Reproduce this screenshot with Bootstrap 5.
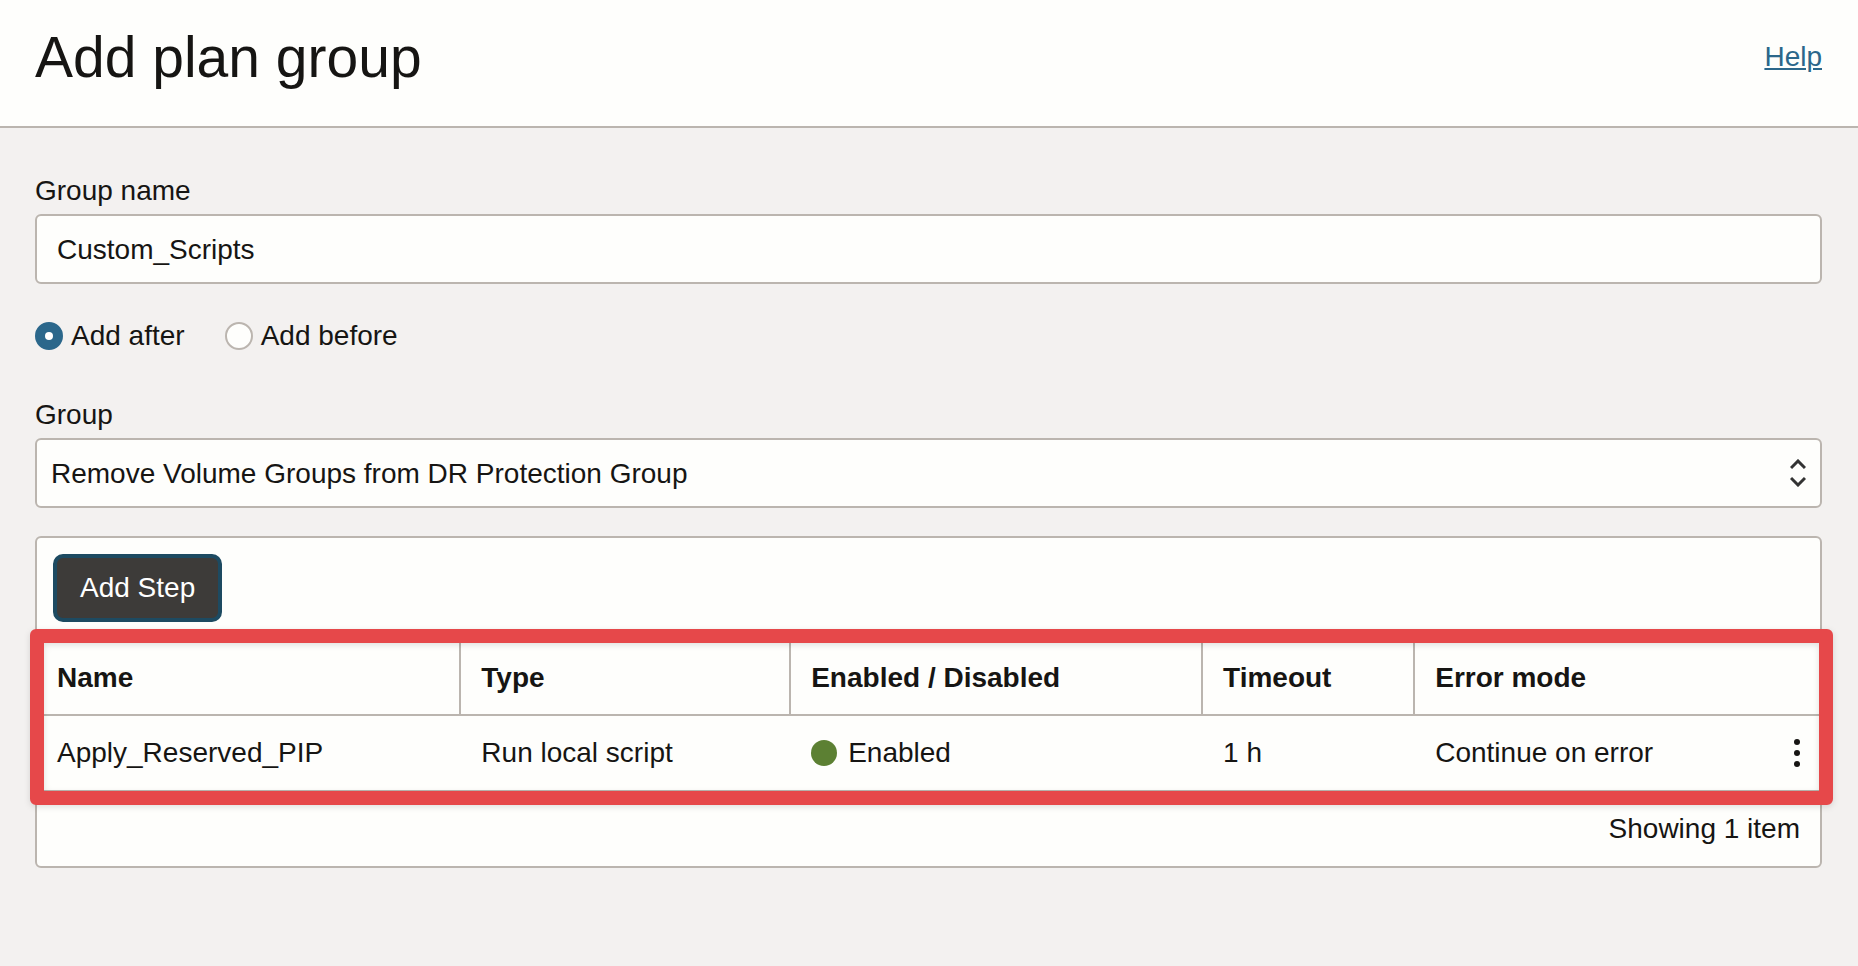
<!DOCTYPE html>
<html lang="en">
<head>
<meta charset="utf-8">
<meta name="viewport" content="width=device-width, initial-scale=1">
<title>Add plan group</title>
<link href="https://cdn.jsdelivr.net/npm/bootstrap@5.3.0/dist/css/bootstrap.min.css" rel="stylesheet">
<style>
  :root { --line: #bbb5af; --surface: #fefefc; --ink: #161513; --accent: #2b678b; }
  body { background: #f3f1f0; color: var(--ink); font-family: "Liberation Sans", Arial, sans-serif; font-size: 28px; line-height: 36px; }
  .page-header { background: var(--surface); border-bottom: 2px solid var(--line); padding: 17px 36px 29px 35px; }
  .page-header h1 { font-size: 57px; line-height: 80px; font-weight: 400; }
  .page-header a { color: var(--accent); text-underline-offset: 2px; text-decoration-thickness: 2px; }
  .page-body { padding: 45px 36px 44px 35px; }
  .field-label { margin-bottom: 5px; display: block; }
  .form-control, .form-select { height: 70px; border: 2px solid var(--line); border-radius: 6px; background-color: var(--surface); color: var(--ink); font-size: 28px; line-height: 36px; padding: 2px 20px 0; }
  .form-select { padding: 2px 48px 0 14px; background-size: 16px 28px; background-position: right 14px center;
    background-image: url("data:image/svg+xml,%3Csvg xmlns='http://www.w3.org/2000/svg' viewBox='0 0 16 28' fill='none' stroke='%23333' stroke-width='3'%3E%3Cpath d='M1 9l7-7 7 7M1 19l7 7 7-7'/%3E%3C/svg%3E"); }
  .choices { gap: 40px; margin: 34px 0 43px; }
  .choice { gap: 8px; }
  .choice .form-check-input { width: 28px; height: 28px; margin: 0; border: 2px solid var(--line); background-color: var(--surface); }
  .choice .form-check-input:checked { border-color: var(--accent); background-color: var(--accent); background-size: 32px 32px;
    background-image: url("data:image/svg+xml,%3Csvg xmlns='http://www.w3.org/2000/svg' viewBox='0 0 32 32'%3E%3Ccircle cx='16' cy='16' r='4' fill='%23fff'/%3E%3C/svg%3E"); }
  .steps { background: var(--surface); border: 2px solid var(--line); border-radius: 6px; margin-top: 28px; }
  .steps-bar { padding: 16px 16px 18px; border-bottom: 2px solid var(--line); }
  .btn-step, .btn-step:hover { background: #3d3b39; color: #fff; border: 4px solid #1d4a61; border-radius: 10px; padding: 12px 23px; font-size: 28px; line-height: 36px; }
  .highlight { position: relative; }
  .highlight::after { content: ""; position: absolute; inset: -13px -13px -13px -7px; border: 14px solid #e6484a; border-radius: 6px; pointer-events: none; filter: drop-shadow(0 2px 3px rgba(0,0,0,.12)); }
  .steps-table { table-layout: fixed; width: 100%; border-collapse: separate; border-spacing: 0; }
  .steps-table th, .steps-table td { padding: 0 20px; border-bottom: 2px solid var(--line); }
  .steps-table th { height: 74px; border-right: 2px solid var(--line); }
  .steps-table th:last-child { border-right: 0; }
  .steps-table td { height: 76px; }
  .status-dot { width: 26px; height: 26px; border-radius: 50%; background: #5c8033; }
  .status { gap: 11px; }
  .btn-menu { padding: 0; border: 0; width: 6px; height: 28px; display: flex; }
  .steps-foot { padding: 19px 20px; }
  .c-name { width: 23.8%; } .c-type { width: 18.5%; } .c-state { width: 23.1%; } .c-time { width: 11.9%; }
</style>
</head>
<body>
<header class="page-header d-flex justify-content-between align-items-center">
  <h1 class="m-0">Add plan group</h1>
  <a href="#">Help</a>
</header>
<main class="page-body">
  <form>
    <label class="field-label" for="group-name">Group name</label>
    <input class="form-control" type="text" id="group-name" value="Custom_Scripts">
    <div class="choices d-flex">
      <div class="choice d-flex align-items-center">
        <input class="form-check-input" type="radio" name="position" id="add-after" checked>
        <label for="add-after">Add after</label>
      </div>
      <div class="choice d-flex align-items-center">
        <input class="form-check-input" type="radio" name="position" id="add-before">
        <label for="add-before">Add before</label>
      </div>
    </div>
    <label class="field-label" for="group">Group</label>
    <select class="form-select" id="group">
      <option>Remove Volume Groups from DR Protection Group</option>
    </select>
  </form>
  <section class="steps">
    <div class="steps-bar d-flex"><button type="button" class="btn btn-step">Add Step</button></div>
    <div class="highlight">
      <table class="steps-table">
        <colgroup><col class="c-name"><col class="c-type"><col class="c-state"><col class="c-time"><col></colgroup>
        <thead>
          <tr><th scope="col">Name</th><th scope="col">Type</th><th scope="col">Enabled / Disabled</th><th scope="col">Timeout</th><th scope="col">Error mode</th></tr>
        </thead>
        <tbody>
          <tr>
            <td>Apply_Reserved_PIP</td>
            <td>Run local script</td>
            <td><div class="status d-flex align-items-center"><span class="status-dot"></span>Enabled</div></td>
            <td>1 h</td>
            <td>
              <div class="d-flex justify-content-between align-items-center">
                Continue on error
                <button type="button" class="btn btn-menu" aria-label="Actions">
                  <svg width="6" height="28" viewBox="0 0 6 28" fill="#161513"><circle cx="3" cy="3" r="3"/><circle cx="3" cy="14" r="3"/><circle cx="3" cy="25" r="3"/></svg>
                </button>
              </div>
            </td>
          </tr>
        </tbody>
      </table>
    </div>
    <div class="steps-foot text-end">Showing 1 item</div>
  </section>
</main>
<script src="https://cdn.jsdelivr.net/npm/bootstrap@5.3.0/dist/js/bootstrap.bundle.min.js"></script>
</body>
</html>
